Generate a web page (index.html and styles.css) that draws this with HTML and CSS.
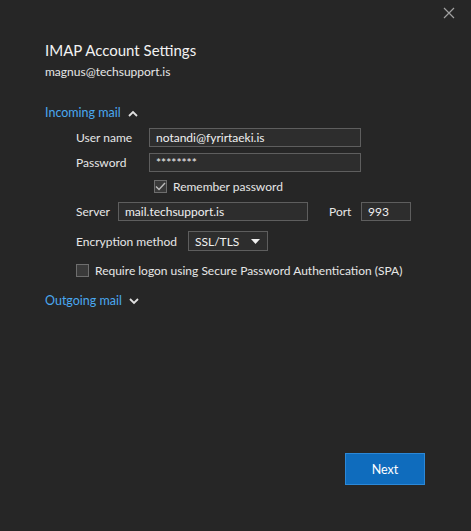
FILE: index.html
```html
<!DOCTYPE html>
<html lang="en">
<head>
    <meta charset="UTF-8">
    <title>IMAP Account Settings</title>
    <link rel="stylesheet" href="styles.css">
</head>
<body>
    <div class="dialog">
        <div class="topbar">
            <button class="close-btn" aria-label="Close">
                <svg width="12" height="12" viewBox="0 0 12 12"><path d="M1 1L11 11M11 1L1 11" stroke="#a0a0a0" stroke-width="1.2" fill="none"/></svg>
            </button>
        </div>

        <div class="content">
            <h2 class="title">IMAP Account Settings</h2>
            <div class="account">magnus@techsupport.is</div>

            <div class="section-head">
                Incoming mail
                <svg width="10" height="7" viewBox="0 0 10 7"><path d="M1 6L5 2L9 6" stroke="#e0e0e0" stroke-width="1.8" fill="none"/></svg>
            </div>

            <div class="form">
                <div class="row">
                    <label class="lbl lbl-user">User name</label>
                    <input class="field field-wide" type="text" value="notandi@fyrirtaeki.is">
                </div>
                <div class="row row-pass">
                    <label class="lbl lbl-user">Password</label>
                    <input class="field field-wide pass" type="text" value="********">
                </div>
                <div class="row row-remember">
                    <span class="check checked">
                        <svg width="11" height="9" viewBox="0 0 11 9"><path d="M1 4.5L4 7.5L10 1" stroke="#bdbdbd" stroke-width="1.4" fill="none"/></svg>
                    </span>
                    <span>Remember password</span>
                </div>
                <div class="row row-server">
                    <label class="lbl lbl-server">Server</label>
                    <input class="field field-server" type="text" value="mail.techsupport.is">
                    <label class="lbl lbl-port">Port</label>
                    <input class="field field-port" type="text" value="993">
                </div>
                <div class="row row-enc">
                    <label class="lbl lbl-enc">Encryption method</label>
                    <div class="select">
                        <span>SSL/TLS</span>
                        <svg width="9" height="5" viewBox="0 0 9 5"><path d="M0 0H9L4.5 5Z" fill="#f0f0f0"/></svg>
                    </div>
                </div>
                <div class="row row-spa">
                    <span class="check"></span>
                    <span>Require logon using Secure Password Authentication (SPA)</span>
                </div>
            </div>

            <div class="section-head section-out">
                Outgoing mail
                <svg width="10" height="7" viewBox="0 0 10 7"><path d="M1 1L5 5L9 1" stroke="#e0e0e0" stroke-width="1.8" fill="none"/></svg>
            </div>
        </div>

        <div class="footer">
            <button class="next-btn">Next</button>
        </div>
    </div>
</body>
</html>
```

FILE: styles.css
```css
body {
    margin: 0;
    background-color: #262626;
    font-family: Lato, "Noto Sans", sans-serif;
    color: #e6e6e6;
    font-size: 12px;
}
.dialog {
    height: 531px;
    display: flex;
    flex-direction: column;
}
.topbar {
    display: flex;
    justify-content: flex-end;
    padding: 7px 16px 0 0;
    height: 20px;
}
.close-btn {
    background: none;
    border: none;
    padding: 0;
    width: 12px;
    height: 12px;
    cursor: pointer;
}
.content {
    flex: 1;
    padding-left: 45px;
}
.title {
    margin: 12px 0 0 0;
    font-size: 15px;
    font-weight: normal;
    color: #f2f2f2;
    line-height: 22px;
}
.account {
    margin-top: 3px;
    line-height: 16px;
}
.section-head {
    margin-top: 25px;
    color: #4aa8f0;
    font-size: 12.5px;
    line-height: 16px;
    display: flex;
    align-items: center;
    gap: 7px;
}
.section-out {
    margin-top: 15px;
}
.form {
    padding-left: 31px;
    margin-top: 7px;
}
.row {
    display: flex;
    align-items: center;
}
.row-pass {
    margin-top: 6px;
}
.row-remember {
    margin-top: 7px;
    padding-left: 78px;
    gap: 6px;
}
.row-server {
    margin-top: 8px;
}
.row-enc {
    margin-top: 10px;
}
.row-spa {
    margin-top: 12px;
    gap: 6px;
}
.lbl {
    color: #e6e6e6;
}
.lbl-user {
    width: 73px;
}
.lbl-server {
    width: 42px;
}
.lbl-port {
    margin-left: 21px;
    width: 32px;
}
.lbl-enc {
    width: 112px;
}
.field {
    box-sizing: border-box;
    height: 19px;
    background: #2d2d2d;
    border: 1px solid #5e5e5e;
    color: #f0f0f0;
    font-family: inherit;
    font-size: 12px;
    padding: 0 6px;
    margin: 0;
    outline: none;
}
.field-wide {
    width: 212px;
}
.pass {
    font-size: 12px;
}
.field-server {
    width: 190px;
}
.field-port {
    width: 50px;
}
.select {
    box-sizing: border-box;
    width: 80px;
    height: 20px;
    background: #2d2d2d;
    border: 1px solid #5e5e5e;
    display: flex;
    align-items: center;
    justify-content: space-between;
    padding: 0 7px 0 6px;
    color: #f0f0f0;
}
.check {
    box-sizing: border-box;
    width: 13px;
    height: 13px;
    background: #3a3a3a;
    border: 1px solid #6e6e6e;
    display: flex;
    align-items: center;
    justify-content: center;
}
.footer {
    display: flex;
    justify-content: flex-end;
    padding: 0 46px 46px 0;
}
.next-btn {
    width: 80px;
    height: 32px;
    background: #0f6cbd;
    border: 1px solid #2b88d8;
    color: #ffffff;
    font-family: inherit;
    font-size: 12.5px;
    cursor: pointer;
}
```
